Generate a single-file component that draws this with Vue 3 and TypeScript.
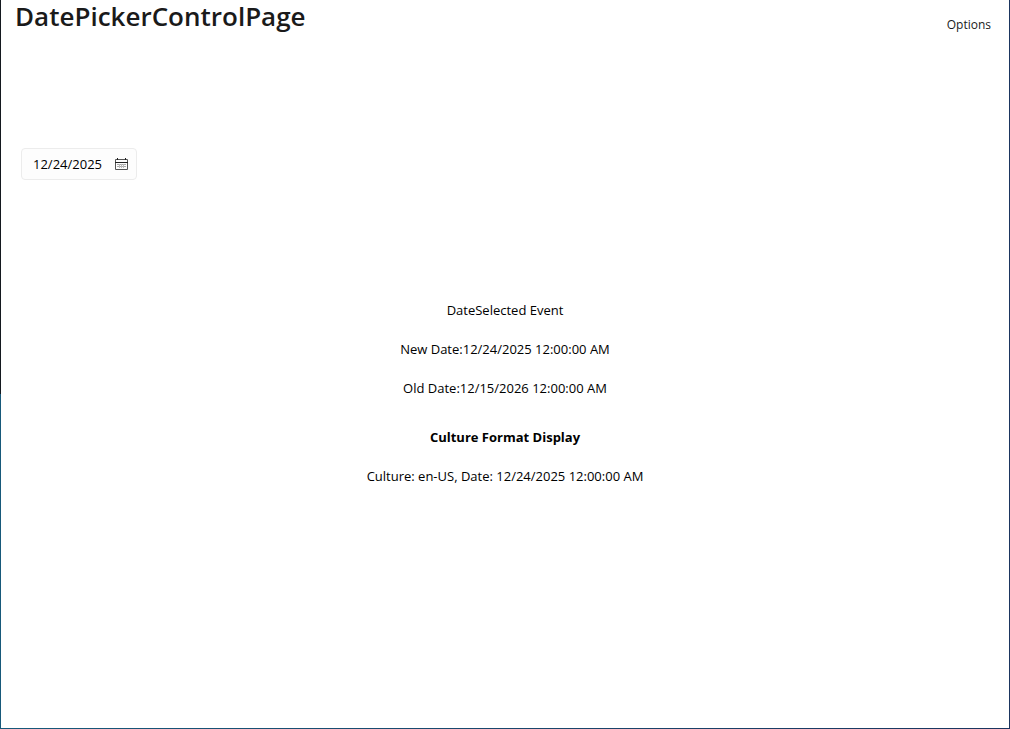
<script setup lang="ts">
import { computed, ref } from 'vue'

const culture = ref('en-US')
const date = ref(new Date(2025, 11, 24))
const oldDate = ref(new Date(2026, 11, 15))

const shortDate = (value: Date): string =>
  `${value.getMonth() + 1}/${value.getDate()}/${value.getFullYear()}`

const longDate = (value: Date): string => `${shortDate(value)} 12:00:00 AM`

const cultureText = computed(() => `Culture: ${culture.value}, Date: ${longDate(date.value)}`)
</script>

<template>
  <div class="window">
    <header class="header">
      <h1 class="title">DatePickerControlPage</h1>
      <button type="button" class="options">Options</button>
    </header>
    <main class="content">
      <button type="button" class="picker" aria-haspopup="dialog">
        <span>{{ shortDate(date) }}</span>
        <svg class="calendar" width="13" height="12" viewBox="0 0 13 12" aria-hidden="true">
          <path d="M.5 1.5h12v10H.5z" fill="none" stroke="#555" />
          <path d="M0 4.5h13M2.5 0v2M10.5 0v2" stroke="#222" />
          <path d="M2 6.5h9M2 8.5h9" stroke="#aaa" />
          <path d="M4.5 6v4M6.5 6v4M8.5 6v4" stroke="#bbb" />
        </svg>
      </button>
      <section class="details">
        <p>DateSelected Event</p>
        <p>New Date:{{ longDate(date) }}</p>
        <p>Old Date:{{ longDate(oldDate) }}</p>
        <h2>Culture Format Display</h2>
        <p>{{ cultureText }}</p>
      </section>
    </main>
  </div>
</template>

<style>
body {
  background: #fff;
}
</style>

<style scoped>
.window {
  box-sizing: border-box;
  min-height: 100vh;
  padding: 0 1px 1px;
  color: #000;
  font-family: "Segoe UI", "Open Sans", "Noto Sans", sans-serif;
  font-size: 13px;
  line-height: 20px;
  background:
    linear-gradient(#14191f 0 54%, #17597a 54%) left / 1px 100% no-repeat,
    linear-gradient(#1b355f, #1b355f) right / 1px 100% no-repeat,
    linear-gradient(90deg, #17597a, #1b355f) bottom / 100% 1px no-repeat,
    #fff;
}

.header {
  display: flex;
  justify-content: space-between;
  height: 50px;
  padding: 0 8px 0 14px;
}

.title {
  margin: 0;
  color: #1a1a1a;
  font-size: 26px;
  font-weight: 600;
  line-height: 32px;
}

.options {
  align-self: center;
  padding: 0 10px;
  border: 0;
  background: transparent;
  color: #1a1a1a;
  font: inherit;
  font-size: 12px;
}

.content {
  padding: 98px 20px 0;
}

.picker {
  display: flex;
  align-items: center;
  justify-content: space-between;
  min-width: 116px;
  height: 32px;
  padding: 0 8px 0 11px;
  border: 1px solid #ececec;
  border-radius: 4px;
  background: #fdfdfd;
  color: #000;
  font: inherit;
}

.calendar {
  display: block;
}

.details {
  padding-top: 120px;
  text-align: center;
}

.details p {
  margin: 0 0 19px;
}

.details h2 {
  margin: 29px 0 19px;
  font-size: 13px;
  font-weight: 700;
}
</style>
